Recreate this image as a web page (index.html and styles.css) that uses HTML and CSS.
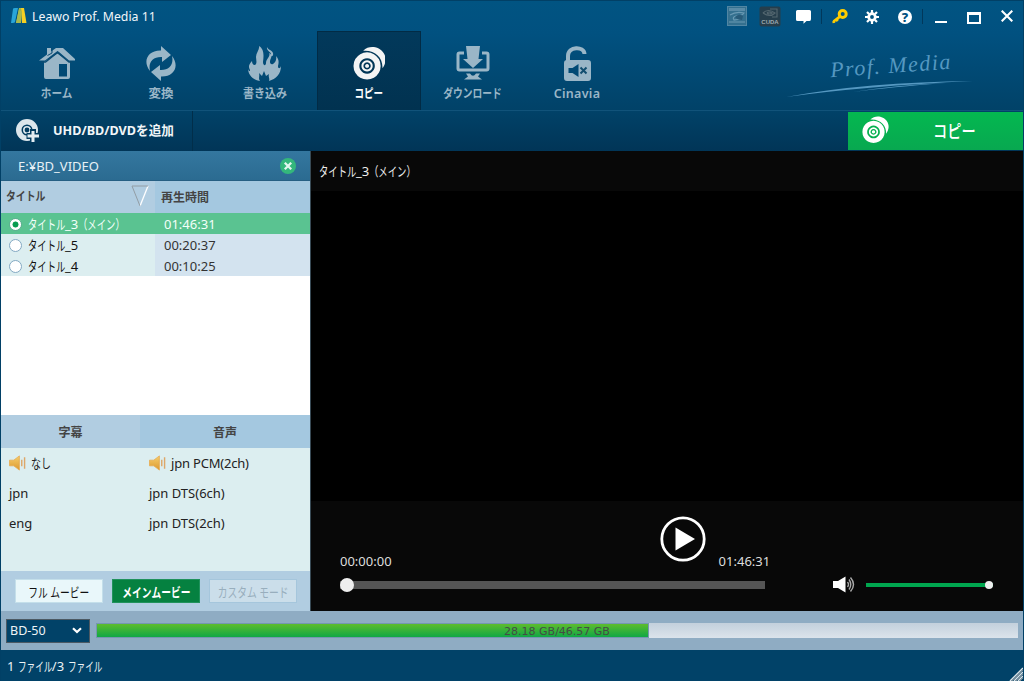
FILE: index.html
```html
<!DOCTYPE html>
<html lang="ja">
<head>
  <meta charset="UTF-8" />
  <title>Leawo Prof. Media 11</title>
  <link rel="stylesheet" href="styles.css">
</head>
<body>

  <svg class="defs" width="0" height="0">
    <defs>
      <symbol id="discs" viewBox="0 0 34 34">
        <path d="M10.500 4.500C14 .5 19 0 23 .8C30 2.500 34 8.500 33.500 14C33.300 17.500 32 20.500 30.300 22.300C31 12 23 3.500 10.500 4.500Z"/>
        <path fill-rule="evenodd" d="M14.500 6a14 14 0 1 0 .01 0ZM14.500 12a8 8 0 1 1-.01 0ZM14.500 14.200a5.800 5.800 0 1 0 .01 0ZM14.500 16.300a3.700 3.700 0 1 1-.01 0ZM14.500 18a2 2 0 1 0 .01 0Z"/>
      </symbol>
      <linearGradient id="gold" x1="0" y1="0" x2="0" y2="1">
        <stop offset="0" stop-color="#f6cf6c"/><stop offset="1" stop-color="#dc982f"/>
      </linearGradient>
      <symbol id="horn" viewBox="0 0 18 16">
        <path d="M.5 5H5L11 .5V15.500L5 11H.5Z" fill="url(#gold)" stroke="#e9a94b" stroke-width=".8"/>
        <path d="M13.500 4.500V11.500M16.500 2V14" stroke="#dda769" stroke-width="1.500"/>
      </symbol>
    </defs>
  </svg>

  <div class="window">
    <div class="header">
      <div class="titlebar">
        <svg class="logo" width="16" height="16" viewBox="0 0 16 16">
          <path d="M2 1Q2 0 4 0H7L4 14Q4 15 0 15Z" fill="#29a5d8"/>
          <path d="M8 0H10L9 15H5Z" fill="#9fbf4b"/>
          <path d="M10 0H13L15.500 15H11Z" fill="#f5cf23"/>
          <path d="M8 1L5 15H10L11 4Z" fill="#a8b94d"/>
        </svg>
        <div class="app-name">Leawo Prof. Media 11</div>
        <div class="window-icons">
          <svg class="chip-icon" width="20" height="20" viewBox="0 0 20 20">
            <rect x=".5" y=".5" width="19" height="19" fill="#34708f" stroke="#5186a3"/>
            <path d="M2 2H18V5H2Z" fill="#598ba7"/>
            <path d="M3 9Q9 5 17 7Q15 10 9 10Q5 11 7 14L14 13M2 16H18" fill="none" stroke="#6a9ab4" stroke-width="1.200"/>
            <path d="M8 11Q12 7 16 10L15 14Q10 14 8 11Z" fill="#285b79"/>
          </svg>
          <svg class="cuda-icon" width="22" height="21" viewBox="0 0 22 21">
            <rect x=".5" y=".5" width="21" height="20" rx="2" fill="#263e4c"/>
            <path d="M4 7Q9 2 16 7Q11 12 4 7M8 7Q10 5 13 7Q10 9 8 7M11 3H18V11H13" fill="none" stroke="#53666f" stroke-width="1.200"/>
            <text x="11" y="18" text-anchor="middle">CUDA</text>
          </svg>
          <svg class="chat-icon" width="15" height="14" viewBox="0 0 15 14">
            <path d="M1.500 0H13.500Q15 0 15 1.500V9Q15 11 13.500 11H10.500L7.500 13.700V11H1.500Q0 11 0 9.500V1.500Q0 0 1.500 0Z" fill="#fff"/>
          </svg>
          <span class="divider"></span>
          <svg class="key-icon" width="16" height="15" viewBox="0 0 16 15">
            <path d="M8.500 7.200L1.500 12.500M1.500 12L2 14M4.500 10.500L5.800 12" stroke="#fc0" stroke-width="2.700" fill="none"/>
            <circle cx="10.700" cy="5" r="3.500" fill="none" stroke="#fc0" stroke-width="3"/>
          </svg>
          <svg class="gear-icon" width="14" height="14" viewBox="0 0 14 14">
            <circle cx="7" cy="7" r="3.300" fill="none" stroke="#fff" stroke-width="2.800"/>
            <path d="M7 0V3M7 11V14M0 7H3M11 7H14M2 2L4 4M10 10L12 12M12 2L10 4M4 10L2 12" stroke="#fff" stroke-width="2.200"/>
          </svg>
          <div class="help-icon">?</div>
          <span class="divider"></span>
          <svg class="min-icon" width="12" height="2"><path d="M0 1H12" stroke="#fff" stroke-width="2"/></svg>
          <svg class="max-icon" width="14" height="12"><path d="M1 1.500H13V11H1Z" fill="none" stroke="#fff" stroke-width="2"/><path d="M0 1.500H14" stroke="#fff" stroke-width="3"/></svg>
          <svg class="close-icon" width="12" height="12"><path d="M.7 .7L11.300 11.300M11.300 .7L.7 11.300" stroke="#fff" stroke-width="2.100"/></svg>
        </div>
      </div>

      <div class="nav-row">
        <div class="nav">
          <div class="nav-item">
            <svg width="38" height="36" viewBox="0 0 38 36">
              <path d="M1 14.500L9 8.500V2H13V5.500L18 2H25L37 13V14.500H31L21 6L19.500 5L7 14.500Z"/>
              <path fill-rule="evenodd" d="M6 16L19.500 7.500L32 16V31Q32 33 30 33H8Q6 33 6 31ZM21 18V30.500H29V18Z"/>
              <path d="M3 16H7.500L19.500 6.500L31 16H34" fill="none" stroke="#0b4b72" stroke-width="1.500"/>
              <path d="M14 2V7L9.500 9.500" fill="none" stroke="#0b4b72"/>
            </svg>
            <span class="w-home">ホーム</span>
          </div>
          <div class="nav-item">
            <svg width="34" height="36" viewBox="0 0 34 36">
              <path d="M6 25C-2 15 4 4 17 4.500V0L27 9L18 16V11C9 10.500 4 16 6 25Z"/>
              <path d="M28 10C36 20 30 31 17 30.500V35L7 26L16 19V24C25 24.500 30 19 28 10Z"/>
            </svg>
            <span>変換</span>
          </div>
          <div class="nav-item">
            <svg width="34" height="36" viewBox="0 0 34 36">
              <path d="M11 0C12 3 8 7 8 11C8 13 9 16 8 18C7 20 4 19 4 15C1 18 0 21 2 24C2.500 26 0 25 0 22C0 29 5 34 12 35C10 32 12 31 11 27L14 30L16 25L18 30L21 28C20 31 22 32 21 35C28 33 33 28 33 20C32 23 30 23 30 20C31 16 31 13 28 10C29 14 27 17 25 18C22 19 21 16 23 12C24 9 23 8 21 7C23 10 18 13 18 17C18 20 15 20 15 16C16 9 16 3 11 0Z"/>
              <path d="M19 1C18 5 24 6 23 9C22 11 26 11 25 7C24 4 20 4 19 1Z"/>
            </svg>
            <span class="w-burn">書き込み</span>
          </div>
          <div class="nav-item active">
            <svg width="32" height="36"><use href="#discs" width="33" height="34"/></svg>
            <span class="w-copy">コピー</span>
          </div>
          <div class="nav-item">
            <svg width="34" height="36" viewBox="0 0 34 36">
              <path d="M8 7H3.500Q2 7 2 8.500V22.500Q2 24 3.500 24H30.500Q32 24 32 22.500V8.500Q32 7 30.500 7H26" fill="none" stroke="#9ab6c7" stroke-width="3"/>
              <path d="M10 0H24L22.500 13H27L17 22L7 13H11.500ZM10 27.500H14Q17 32 20 27.500H24L22 30.500L26 33.500H8L12 30.500Z"/>
            </svg>
            <span class="w-download">ダウンロード</span>
          </div>
          <div class="nav-item">
            <svg width="34" height="36" viewBox="0 0 34 36">
              <path d="M8 17V10C8 0 24 0 24.500 8" fill="none" stroke="#9ab6c7" stroke-width="4"/>
              <path fill-rule="evenodd" d="M7 14H28Q31 14 31 17V32Q31 35 28 35H7Q4 35 4 32V17Q4 14 7 14ZM8.500 22V27H12.500L18.500 31V18L12.500 22Z"/>
              <path d="M20.500 21.500L26.500 27.500M26.500 21.500L20.500 27.500" stroke="#124e70" stroke-width="2"/>
            </svg>
            <span class="latin">Cinavia</span>
          </div>
        </div>
        <div class="brand">
          <div class="brand-name">Prof. Media</div>
          <svg width="188" height="18" viewBox="0 0 188 18">
            <path d="M0 17Q80 2 187 1Q80 6 0 17Z" fill="#5598c1"/>
            <path d="M67 12Q110 5 160 3Q105 7 67 12Z" fill="#5598c1"/>
          </svg>
        </div>
      </div>
    </div>

    <div class="toolbar">
      <div class="add-button">
        <svg width="23" height="23" viewBox="0 0 23 23">
          <path fill="#dbe6ec" fill-rule="evenodd" d="M11 0A11 11 0 1 0 11 22A11 11 0 1 0 11 0ZM11 5.500A5.500 5.500 0 1 1 11 16.500A5.500 5.500 0 1 1 11 5.500Z"/>
          <circle cx="11" cy="11" r="3.200" fill="none" stroke="#dbe6ec" stroke-width="1.600"/>
          <path d="M17 10V23M10.500 17H23" stroke="#023c60" stroke-width="6"/>
          <path d="M17 12V23M11.500 17H23" stroke="#e4edf2" stroke-width="3"/>
        </svg>
        <span>UHD/BD/DVDを追加</span>
      </div>
      <div class="copy-button">
        <svg width="28" height="28"><use href="#discs" width="27" height="27"/></svg>
        <span>コピー</span>
      </div>
    </div>

    <div class="main">
      <div class="sidebar">
        <div class="source">
          <span>E:¥BD_VIDEO</span>
          <svg width="16" height="16" viewBox="0 0 16 16">
            <circle cx="8" cy="8" r="8" fill="#34b77c"/>
            <path d="M4.800 4.800L11.200 11.200M11.200 4.800L4.800 11.200" stroke="#e2f7ee" stroke-width="2.300"/>
          </svg>
        </div>
        <div class="title-head">
          <div class="col-title">
            <span class="w-title">タイトル</span>
            <svg width="18" height="22" viewBox="0 0 18 22">
              <path d="M17 1L9 21" stroke="#fff" stroke-width="1.300"/>
              <path d="M9 21L1 1H17" fill="none" stroke="#929da5"/>
            </svg>
          </div>
          <div class="col-time">再生時間</div>
        </div>
        <div class="title-row selected">
          <div class="col-title"><i class="radio"></i><span><b class="kana">タイトル</b>_3<b class="kana">（メイン）</b></span></div>
          <div class="col-time">01:46:31</div>
        </div>
        <div class="title-row">
          <div class="col-title"><i class="radio"></i><span><b class="kana">タイトル</b>_5</span></div>
          <div class="col-time">00:20:37</div>
        </div>
        <div class="title-row">
          <div class="col-title"><i class="radio"></i><span><b class="kana">タイトル</b>_4</span></div>
          <div class="col-time">00:10:25</div>
        </div>
        <div class="blank"></div>

        <div class="track-head">
          <div class="col-sub">字幕</div>
          <div class="col-audio">音声</div>
        </div>
        <div class="tracks">
          <div class="col-sub">
            <div><svg width="17" height="16"><use href="#horn" width="17" height="16"/></svg><span class="w-none">なし</span></div>
            <div>jpn</div>
            <div>eng</div>
          </div>
          <div class="col-audio">
            <div><svg width="17" height="16"><use href="#horn" width="17" height="16"/></svg><span class="pcm">jpn PCM(2ch)</span></div>
            <div>jpn DTS(6ch)</div>
            <div>jpn DTS(2ch)</div>
          </div>
        </div>
        <div class="modes">
          <div class="mode"><span>フル ムービー</span></div>
          <div class="mode current"><span>メインムービー</span></div>
          <div class="mode disabled"><span>カスタム モード</span></div>
        </div>
      </div>

      <div class="player">
        <div class="player-title"><span><b class="kana">タイトル</b>_3<b class="kana">（メイン）</b></span></div>
        <div class="video"></div>
        <div class="controls">
          <div class="seek">
            <div class="times">
              <span>00:00:00</span>
              <svg width="46" height="46" viewBox="0 0 46 46">
                <circle cx="23" cy="23" r="21.200" fill="none" stroke="#fff" stroke-width="2.800"/>
                <path d="M15.500 11.500L35 23L15.500 34.500Z" fill="#fff"/>
              </svg>
              <span>01:46:31</span>
            </div>
            <div class="seek-bar"><i class="knob"></i></div>
          </div>
          <div class="volume">
            <svg width="22" height="17" viewBox="0 0 22 17">
              <path d="M0 5H5L12.500 .5V16.500L5 12H0Z" fill="#fff"/>
              <path d="M14.500 6Q16.500 8.500 14.500 11M16 3.500Q19.500 8.500 16 13.500M17.500 1.500Q23.500 8.500 17.500 15.500" fill="none" stroke="#aaa" stroke-width="1.400"/>
            </svg>
            <div class="volume-bar"><i class="knob"></i></div>
          </div>
        </div>
      </div>
    </div>

    <div class="capacity">
      <div class="disc-type">
        <span>BD-50</span>
        <svg width="10" height="7" viewBox="0 0 10 7"><path d="M1 1.200L5 5L9 1.200" fill="none" stroke="#fff" stroke-width="2.200"/></svg>
      </div>
      <div class="capacity-bar">
        <div class="capacity-used" style="width: 60%"></div>
        <div class="capacity-text">28.18 GB/46.57 GB</div>
      </div>
    </div>

    <div class="status">
      <span>1 <b class="kana tight">ファイル</b>/3 <b class="kana tight">ファイル</b></span>
      <svg width="14" height="14" viewBox="0 0 14 14">
        <path d="M1 14L14 1M5 14L14 5M9 14L14 9" stroke="#dbe2e6" stroke-width="1.500"/>
        <path d="M3 14L14 3M7 14L14 7M11 14L14 11" stroke="#7b8b95"/>
      </svg>
    </div>
  </div>

</body>
</html>
```

FILE: styles.css
```css
* {
  box-sizing: border-box;
}
body {
  margin: 0;
  font-family: "Noto Sans", "Noto Sans CJK JP", sans-serif;
  font-size: 13px;
  line-height: 20px;
  color: #333;
  overflow: hidden;
}
svg {
  display: block;
  flex: none;
}
span {
  white-space: nowrap;
  display: block;
}
.defs {
  position: absolute;
}
/* narrow katakana */
.kana {
  display: inline-block;
  font-weight: inherit;
  transform: scaleX(.72);
  transform-origin: left;
  margin-right: -15px;
}
.kana.tight {
  transform: scaleX(.66);
  margin-right: -18px;
}
.window {
  width: 1024px;
  height: 681px;
  border: 1px solid #014066;
  border-bottom: 0;
  background-color: #014268;
  display: flex;
  flex-direction: column;
}

/* header */
.header {
  height: 110px;
  background: linear-gradient(#015482, #015180 30%, #014268);
  border-bottom: 1px solid #11537a;
}
.titlebar {
  height: 30px;
  display: flex;
  align-items: center;
  padding-left: 10px;
}
.app-name {
  margin: 2px 0 0 5px;
  color: #f1f6f9;
  font-size: 12.300px;
}
.window-icons {
  margin-left: auto;
  display: flex;
  align-items: center;
  padding-right: 10px;
}
.chip-icon {
  margin-right: 12px;
}
.cuda-icon {
  margin-right: 15px;
}
.cuda-icon text {
  font: bold 6px "Liberation Sans", sans-serif;
  fill: #9daab1;
}
.chat-icon {
  margin: 1px 10px 0 0;
}
.divider {
  width: 1px;
  height: 15px;
  background-color: #01385b;
}
.key-icon {
  margin: 1px 17px 0 10px;
}
.gear-icon {
  margin: 1px 19px 0 0;
}
.help-icon {
  width: 14px;
  height: 14px;
  border-radius: 50%;
  background-color: #fff;
  color: #015180;
  font-weight: 800;
  line-height: 14px;
  text-align: center;
  margin: 1px 10px 0 0;
}
.min-icon {
  margin: 11px 20px 0 12px;
}
.max-icon {
  margin: 3px 20px 0 0;
}
.nav-row {
  display: flex;
  justify-content: space-between;
  padding-left: 4px;
}
.nav {
  display: flex;
  fill: #9ab6c7;
}
.nav-item {
  width: 104px;
  height: 79px;
  padding-top: 15px;
  display: flex;
  flex-direction: column;
  align-items: center;
  color: #9ab6c7;
  font-size: 12.500px;
  font-weight: 600;
}
.nav-item span {
  margin-top: 2px;
}
.nav-item .w-home {
  transform: scaleX(.85);
}
.nav-item .w-burn {
  transform: scaleX(.88);
}
.nav-item .latin {
  letter-spacing: .3px;
}
.nav-item .w-copy {
  transform: scaleX(.76);
}
.nav-item .w-download {
  transform: scaleX(.78);
}
.nav-item.active {
  background: linear-gradient(#02395b, #013250);
  border: 1px solid #022b45;
  border-bottom: 0;
  padding-top: 14px;
  color: #fff;
  fill: #f4f4f4;
}
.brand {
  width: 237px;
  padding-top: 24px;
}
.brand-name {
  margin-left: 44px;
  width: 120px;
  color: #5598c1;
  font-family: "Liberation Serif", serif;
  font-style: italic;
  font-size: 22px;
  line-height: 22px;
  letter-spacing: 1.500px;
  white-space: nowrap;
  transform: rotate(-4deg);
}
.brand svg {
  margin-top: 3px;
}

/* toolbar */
.toolbar {
  height: 40px;
  background: linear-gradient(#014268, #013557);
  display: flex;
  justify-content: space-between;
}
.add-button {
  width: 192px;
  padding: 0 0 2px 15px;
  border-right: 1px solid #012e4a;
  display: flex;
  align-items: center;
  color: #f2f6f8;
  font-weight: 700;
}
.add-button span {
  margin-left: 14px;
  transform: scaleX(.97);
  transform-origin: left;
}
.copy-button {
  width: 175px;
  height: 38px;
  margin-top: 1px;
  padding-left: 14px;
  background: linear-gradient(#04b850, #08a850);
  display: flex;
  align-items: center;
  color: #fff;
  fill: #fff;
  font-size: 18px;
  font-weight: 500;
}
.copy-button svg {
  margin-bottom: 2px;
}
.copy-button span {
  margin-left: 43px;
  transform: scaleX(.79);
  transform-origin: left;
}

/* title and track lists */
.main {
  height: 460px;
  display: flex;
}
.sidebar {
  width: 310px;
  border-right: 1px solid #384a55;
}
.source {
  height: 30px;
  background: linear-gradient(#34779f, #2b6b91);
  border-bottom: 1px solid #265f83;
  color: #e8f1f6;
  display: flex;
  align-items: center;
  justify-content: space-between;
  padding: 1px 14px 0 17px;
}
.title-head {
  height: 32px;
  display: flex;
  line-height: 34px;
  font-weight: 600;
  font-size: 12px;
  color: #444;
}
.col-title {
  width: 154px;
  display: flex;
  align-items: center;
}
.title-head .col-title {
  background-color: #b1cde1;
  justify-content: space-between;
  padding: 0 6px 0 5px;
}
.title-head svg {
  margin-bottom: 2px;
}
.title-head .w-title {
  transform: scaleX(.82);
  transform-origin: left;
}
.col-time {
  flex: 1;
  padding-left: 9px;
}
.title-head .col-time {
  background-color: #a4c8e0;
  padding-left: 6px;
}
.title-row {
  height: 21px;
  line-height: 20px;
  display: flex;
  background-color: #dceef0;
}
.title-row .col-title {
  padding: 1px 0 0 8px;
}
.title-row .col-title span {
  margin-left: 6px;
  color: #111;
}
.title-row .col-time {
  background-color: #d3e3ef;
  padding-top: 1px;
}
.title-row.selected,
.title-row.selected .col-time {
  background-color: #5ac391;
  color: #f3fff9;
}
.title-row.selected .col-title span {
  color: #f3fff9;
}
.radio {
  width: 13px;
  height: 13px;
  border: 1px solid #83a9c3;
  border-radius: 50%;
  background-color: #fff;
  flex: none;
}
.selected .radio {
  border-color: #5eaf92;
  background: radial-gradient(circle, #089c50 0 2.700px, #fff 3.300px);
}
.blank {
  height: 139px;
  background-color: #fff;
}
.track-head {
  height: 33px;
  display: flex;
  line-height: 35px;
  font-size: 12px;
  font-weight: 600;
  color: #444;
  text-align: center;
}
.col-sub {
  width: 139px;
}
.col-audio {
  flex: 1;
}
.track-head .col-sub {
  background-color: #b1cde1;
}
.track-head .col-audio {
  background-color: #a4c8e0;
}
.tracks {
  height: 123px;
  display: flex;
  background-color: #dceef0;
  color: #222;
}
.tracks > div {
  padding-left: 8px;
}
.tracks > .col-audio {
  padding-left: 9px;
}
.tracks > div > div {
  height: 30px;
  display: flex;
  align-items: center;
}
.tracks svg {
  margin-right: 5px;
}
.w-none {
  transform: scaleX(.77);
  transform-origin: left;
}
.pcm {
  letter-spacing: -.2px;
}
.modes {
  height: 40px;
  background-color: #b1cde1;
  display: flex;
  align-items: center;
  gap: 9px;
  padding-left: 14px;
}
.mode {
  width: 88px;
  height: 24px;
  border: 1px solid #c4dfea;
  background-color: #e9f7fa;
  color: #111;
  display: flex;
  align-items: center;
  justify-content: center;
}
.mode span {
  transform: scaleX(.75);
  margin-top: 1px;
}
.mode.current {
  background-color: #058140;
  border-color: #20925c;
  color: #fff;
  font-weight: 600;
}
.mode.disabled {
  background-color: #cbdeea;
  border-color: #a5c6dc;
  color: #98aebd;
}

/* player */
.player {
  flex: 1;
  display: flex;
  flex-direction: column;
}
.player-title {
  height: 40px;
  padding-left: 8px;
  line-height: 40px;
  background-color: #080808;
  color: #eee;
}
.video {
  flex: 1;
  background-color: #000;
}
.controls {
  height: 110px;
  background-color: #080808;
  color: #ddd;
  display: flex;
}
.seek {
  width: 425px;
  margin-left: 29px;
}
.times {
  height: 80px;
  padding-top: 16px;
  display: flex;
}
.times span {
  margin-top: 34px;
}
.times svg {
  margin: -1px 13px 0 268px;
}
.seek-bar {
  height: 8px;
  background-color: #555;
  display: flex;
  align-items: center;
}
.knob {
  width: 14px;
  height: 14px;
  border-radius: 50%;
  background-color: #eee;
}
.volume {
  margin: 75px 0 0 68px;
  display: flex;
  align-items: center;
  height: 17px;
}
.volume-bar {
  width: 127px;
  height: 4px;
  margin-left: 11px;
  background-color: #00a64f;
  display: flex;
  align-items: center;
  justify-content: flex-end;
}
.volume-bar .knob {
  width: 8px;
  height: 8px;
}

/* bottom bars */
.capacity {
  height: 39px;
  background-color: #8facc3;
  display: flex;
  align-items: center;
  padding: 0 5px;
}
.disc-type {
  width: 84px;
  height: 24px;
  border: 1px solid #4c5963;
  background-color: #014268;
  color: #edf3f6;
  display: flex;
  align-items: center;
  justify-content: space-between;
  padding: 0 7px 0 3px;
  font-size: 12.500px;
}
.capacity-bar {
  flex: 1;
  height: 15px;
  margin-left: 6px;
  background: linear-gradient(#c3d0dc, #dbe3eb);
  position: relative;
}
.capacity-used {
  height: 15px;
  border: 1px solid #7597b0;
  background: linear-gradient(#5dbc2d, #10a845);
}
.capacity-text {
  position: absolute;
  inset: 0;
  line-height: 17px;
  text-align: center;
  font-family: "DejaVu Sans", sans-serif;
  font-size: 11px;
  color: #444c45;
}
.status {
  height: 31px;
  display: flex;
  align-items: center;
  justify-content: space-between;
  padding-left: 6px;
  color: #edf3f6;
}
.status svg {
  align-self: flex-end;
}
```
